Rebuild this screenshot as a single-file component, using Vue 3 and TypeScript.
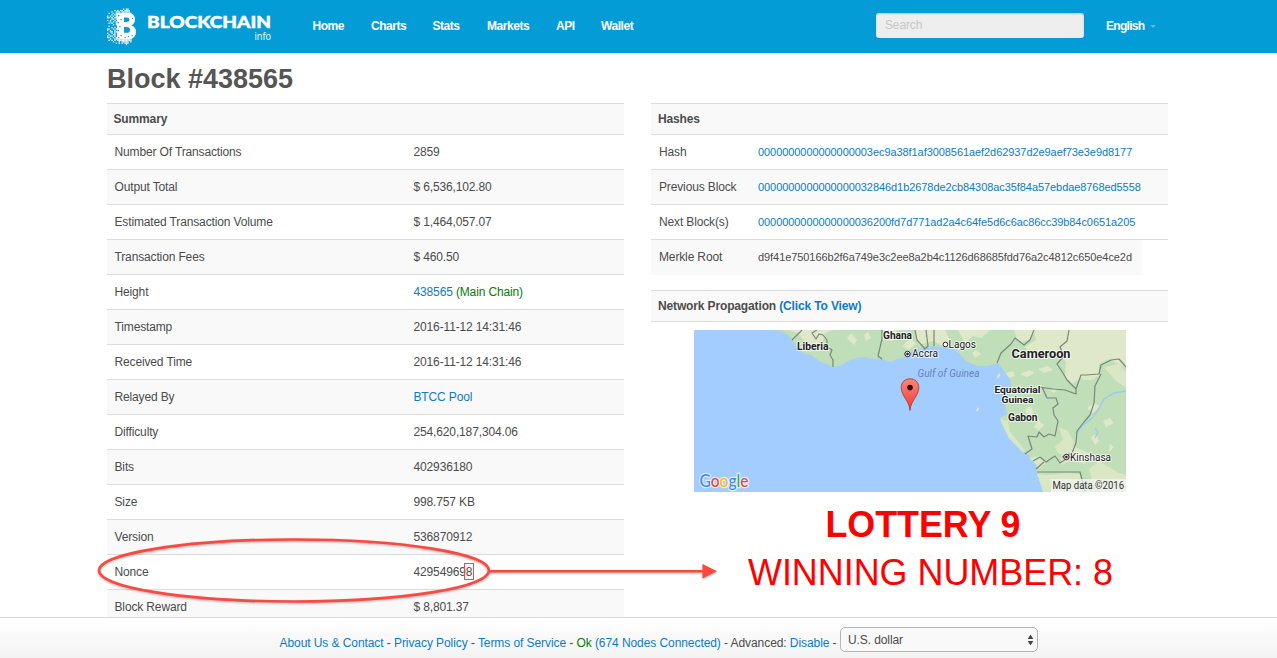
<script setup lang="ts">
interface Row {
  label: string
  value: string
  link?: boolean
  note?: string
}

const nav: string[] = ['Home', 'Charts', 'Stats', 'Markets', 'API', 'Wallet']

const summary: Row[] = [
  { label: 'Number Of Transactions', value: '2859' },
  { label: 'Output Total', value: '$ 6,536,102.80' },
  { label: 'Estimated Transaction Volume', value: '$ 1,464,057.07' },
  { label: 'Transaction Fees', value: '$ 460.50' },
  { label: 'Height', value: '438565', link: true, note: '(Main Chain)' },
  { label: 'Timestamp', value: '2016-11-12 14:31:46' },
  { label: 'Received Time', value: '2016-11-12 14:31:46' },
  { label: 'Relayed By', value: 'BTCC Pool', link: true },
  { label: 'Difficulty', value: '254,620,187,304.06' },
  { label: 'Bits', value: '402936180' },
  { label: 'Size', value: '998.757 KB' },
  { label: 'Version', value: '536870912' },
  { label: 'Nonce', value: '429549698' },
  { label: 'Block Reward', value: '$ 8,801.37' },
]

const hashes: Row[] = [
  { label: 'Hash', value: '0000000000000000003ec9a38f1af3008561aef2d62937d2e9aef73e3e9d8177', link: true },
  { label: 'Previous Block', value: '0000000000000000032846d1b2678de2cb84308ac35f84a57ebdae8768ed5558', link: true },
  { label: 'Next Block(s)', value: '0000000000000000036200fd7d771ad2a4c64fe5d6c6ac86cc39b84c0651a205', link: true },
  { label: 'Merkle Root', value: 'd9f41e750166b2f6a749e3c2ee8a2b4c1126d68685fdd76a2c4812c650e4ce2d' },
]

// Pixel dust around the logo's B, one character per cell
const dust: string[] = [
  '...........#.##...',
  '.....#.#.##.####..',
  '...#..###.######..',
  '.#..#.#.#########.',
  '...#.##.##........',
  '#.#.#.####........',
  '##.#.##.##........',
  '...##.####........',
  '#.#..#.###........',
  '..#.#.#.##........',
  '.#.#..####........',
  '....#.#.##........',
  '.#.....###........',
  '...#.#.###........',
  '##..#.#.##........',
  '#.#..#.###........',
  '..##.##.##........',
  '#..#.#.###........',
  '.#..##.###........',
  '#.##.#.#.#........',
  '##..#.####........',
  '..#..##.#.#######.',
  '.#.#.#.##########.',
  '....#...#.#####.#.',
  '......#.#.#.###...',
  '.............#....',
]
const cells = dust.flatMap((line, y) =>
  [...line].flatMap((c, x) => (c === '#' ? [{ x: x * 1.45, y: y * 1.42 }] : [])),
)
</script>

<template>
  <div class="page">
    <header class="topbar">
      <svg class="logo" width="170" height="42" viewBox="0 0 170 42">
        <g fill="#fff">
          <rect v-for="(c, i) in cells" :key="i" :x="c.x" :y="c.y + 2.5" width="1.35" height="1.3" />
          <path fill-rule="evenodd" d="M10 7H20C26 7 28 9.6 28 13.4C28 16.3 26.6 18.2 24.4 19.2C27.3 20.2 29 22.6 29 25.8C29 30.6 25.8 33.6 20 33.6H10ZM17 11.6V16H19.6C21.4 16 22.3 15.2 22.3 13.8C22.3 12.3 21.4 11.6 19.6 11.6ZM17 21V26.8H20C22 26.8 23 25.6 23 23.9C23 22 22 21 20 21Z" />
        </g>
        <g fill="#049cd7">
          <rect x="11" y="9" width="1.3" height="1.3" /><rect x="13.5" y="13" width="1.2" height="1.2" />
          <rect x="10.5" y="16" width="1.4" height="1.3" /><rect x="12.2" y="20" width="1.3" height="1.2" />
          <rect x="10.5" y="24" width="1.4" height="1.3" /><rect x="13.5" y="29" width="1.2" height="1.2" />
          <rect x="11" y="31" width="1.3" height="1.3" /><rect x="17.5" y="31" width="1.1" height="1.1" />
          <rect x="25" y="12" width="1" height="1" /><rect x="24.6" y="29" width="1.1" height="1.1" />
          <rect x="21" y="30.2" width="1" height="1" />
        </g>
        <text class="brand" x="40" y="21.7" textLength="124" lengthAdjust="spacingAndGlyphs">BLOCKCHAIN</text>
        <text class="brand-sub" x="147.5" y="34.4" textLength="16.5" lengthAdjust="spacingAndGlyphs">info</text>
      </svg>
      <nav class="nav">
        <a v-for="n in nav" :key="n">{{ n }}</a>
      </nav>
      <div class="search">Search</div>
      <div class="lang">English <i class="caret"></i></div>
    </header>

    <main class="content">
      <h1>Block #438565</h1>
      <div class="columns">
        <section class="panel">
          <h2>Summary</h2>
          <div v-for="r in summary" :key="r.label" class="row">
            <span class="label">{{ r.label }}</span>
            <span class="value"><span :class="{ link: r.link }">{{ r.value }}</span>&#32;<span v-if="r.note" class="ok">{{ r.note }}</span></span>
          </div>
        </section>
        <section class="panel side">
          <h2>Hashes</h2>
          <div v-for="r in hashes" :key="r.label" class="row hash-row">
            <span class="label">{{ r.label }}</span>
            <span class="value" :class="{ link: r.link }">{{ r.value }}</span>
          </div>
          <h2 class="propagation">Network Propagation <span class="link">(Click To View)</span></h2>
          <svg class="map" width="432" height="162" viewBox="0 0 432 162">
            <rect width="432" height="162" fill="#a3ccff" />
            <path fill="#c0dfb8" stroke="#b3d4d4" stroke-width=".7" d="M83 0L93 4L98 10L103 18L111 24L117 25L125 31L132 34L139 37L148 35L154 31L162 28L170 27L179 29L188 29L196 32L204 29L212 27L218 21L227 19L238 16L248 17L259 18L265 23L272 31L283 36L294 36L304 33L308 38L311 43L316 47L317 56L314 61L315 69L311 76L313 84L306 88L309 96L314 106L323 115L333 124L341 133L343 144L348 155L349 162H432V0Z" />
            <g fill="#dfe8c8">
              <path d="M92 0L104 3L110 11L119 15L129 11L131 3L139 0ZM153 8L157 3L163 10L160 15ZM188 0H203L199 11L189 10ZM221 0H251L256 10L249 16L239 11L225 15ZM264 0H296L287 8L279 6L271 13ZM320 0H343L336 9L328 12L323 9ZM340 0H432V38L415 29L405 34V47L392 45L378 54L371 46L372 32L366 24L352 20L338 27L331 17L342 10Z" />
              <path d="M343 144L355 145L373 143L387 144V162H349ZM361 117L369 110L365 97L374 101L380 112L374 126L364 123ZM306 89L314 91L316 102L331 120L329 123L314 107ZM395 139L405 131L423 142L432 145V162H407L400 156ZM374 114L386 119L399 125L391 134L377 130L367 135L367 126ZM384 43L394 34L405 41L400 50L389 50ZM410 37L425 34L432 42V58L420 49ZM335 128L346 126L353 132L346 138Z" opacity=".8" />
              <path d="M114 18h6l-3 4zM170 5l4-3 3 6-5 3zM208 16l9-8 5 6-8 6zM326 44l10-4 4 3-7 4zM344 39l10-3 5 4-9 3zM331 80l5-4 4 6-6 4zM340 97l4-7 6 5-5 5zM393 78l7-5 6 3-7 7zM409 91l7-3 4 5-8 4zM416 114l4 3-5 5zM356 60l9-2-5 5zM278 23l4-3 5 4-6 4zM397 107l5-3 3 7-4 4zM312 43l7-2 2 5-6 2z" />
              <path d="M303 47l2-4 1.5 2-3 4zM282 80l2-3 1 2-2 3z" />
            </g>
            <path fill="none" stroke="#9ccbed" stroke-width="1.4" d="M432 61L420 63L410 69L404 80L398 88L388 96L382 104M401 98L404 102L401 108" />
            <path fill="none" stroke="#78877b" stroke-width="1.2" stroke-linejoin="round" d="M98 10L108 0M139 37V30L136 25L138 20L133 17V10L129 5L125 4L122 9L118 3L123 0M188 29L184 26L188 9V0M221 0L223 10L231 19L234 16L232 0M240 16V0M303 33L307 23L317 14L321 8L330 15L336 10L340 0M432 37L425 29L417 30L407 35L405 44L392 45L387 45L382 59L373 50L369 43L363 34L370 26L366 17L373 11L375 0M407 44L401 56L400 73L396 85L390 92L383 101L382 113L378 123L368 127M345 57L359 59L371 60L382 64V59M348 57L353 68H362L364 74L359 78L360 85L364 91L361 106L355 104L350 107L345 102L343 107L334 106L338 119L331 124M339 131L346 127L352 132L361 126L366 133L372 129L372 126M342 139L350 132M343 142H386L389 153M386 142L391 162" />
            <g class="map-labels">
              <text x="103" y="19.8" font-size="10.5" font-weight="700" textLength="31.5" lengthAdjust="spacingAndGlyphs">Liberia</text>
              <text x="189" y="9" font-size="10.5" font-weight="700" textLength="29" lengthAdjust="spacingAndGlyphs">Ghana</text>
              <text x="218" y="27" font-size="10" textLength="26" lengthAdjust="spacingAndGlyphs">Accra</text>
              <text x="254.5" y="18" font-size="10" textLength="27.5" lengthAdjust="spacingAndGlyphs">Lagos</text>
              <text x="317.5" y="27.8" font-size="12.2" font-weight="700" textLength="59" lengthAdjust="spacingAndGlyphs">Cameroon</text>
              <text x="300.5" y="63.3" font-size="9.6" font-weight="700" textLength="46" lengthAdjust="spacingAndGlyphs">Equatorial</text>
              <text x="307.5" y="73" font-size="9.6" font-weight="700" textLength="32" lengthAdjust="spacingAndGlyphs">Guinea</text>
              <text x="314" y="90.8" font-size="10.3" font-weight="700" textLength="29.5" lengthAdjust="spacingAndGlyphs">Gabon</text>
              <text x="376" y="130.7" font-size="10" textLength="41" lengthAdjust="spacingAndGlyphs">Kinshasa</text>
            </g>
            <text x="223.5" y="46.5" class="gulf" textLength="62" lengthAdjust="spacingAndGlyphs">Gulf of Guinea</text>
            <g fill="#fff" stroke="#222" stroke-width="1">
              <circle cx="213.5" cy="24" r="2.7" /><circle cx="213.5" cy="24" r=".9" fill="#222" />
              <circle cx="251.4" cy="14.5" r="2.3" />
              <circle cx="372.4" cy="127" r="2.7" /><circle cx="372.4" cy="127" r=".9" fill="#222" />
            </g>
            <defs>
              <linearGradient id="pin" x1="0" y1="0" x2="0" y2="1">
                <stop offset="0" stop-color="#fb857d" /><stop offset="1" stop-color="#ee3b32" />
              </linearGradient>
            </defs>
            <path fill="url(#pin)" stroke="#a9352f" stroke-width=".8" d="M216 80.5C215.3 70.5 207.2 66 207.2 57.5C207.2 52.2 211 48.8 216 48.8S224.8 52.2 224.8 57.5C224.8 66 216.7 70.5 216 80.5Z" />
            <circle cx="216" cy="57.6" r="2.8" fill="#3c0b09" />
            <text class="google" x="5.5" y="156.5" textLength="49" lengthAdjust="spacingAndGlyphs"><tspan fill="#4285f4">G</tspan><tspan fill="#ea4335">o</tspan><tspan fill="#fbbc05">o</tspan><tspan fill="#4285f4">g</tspan><tspan fill="#34a853">l</tspan><tspan fill="#ea4335">e</tspan></text>
            <rect x="357" y="149" width="75" height="13" fill="#f5f5f5" opacity=".72" />
            <text class="credit" x="358.5" y="158.5" textLength="71.5" lengthAdjust="spacingAndGlyphs">Map data ©2016</text>
          </svg>
        </section>
      </div>
    </main>

    <footer class="footer">
      <span class="links"><span class="link">About Us &amp; Contact</span> - <span class="link">Privacy Policy</span> - <span class="link">Terms of Service</span> - <span class="ok">Ok</span> <span class="link">(674 Nodes Connected)</span> - Advanced: <span class="link">Disable</span> -</span>
      <div class="select">U.S. dollar
        <svg width="7" height="12" viewBox="0 0 7 12"><path fill="#444" d="M3.5 .5L6.3 5H.7ZM3.5 11.5L6.3 7H.7Z" /></svg>
      </div>
    </footer>

    <svg class="notes" width="1277" height="658" viewBox="0 0 1277 658">
      <g class="marker">
        <ellipse cx="294" cy="570.5" rx="195" ry="31" fill="none" stroke="#fb493f" stroke-width="2.7" />
        <path d="M489 571.2H704" stroke="#fb493f" stroke-width="2.4" />
        <path d="M702.5 564L717 571.2L702.5 578.4Z" fill="#fb493f" />
      </g>
      <rect x="464.5" y="563.5" width="9" height="16" fill="none" stroke="#fb493f" />
      <text class="lottery" x="825.5" y="537" textLength="195" lengthAdjust="spacingAndGlyphs">LOTTERY 9</text>
      <text class="winning" x="748" y="585.3" textLength="365" lengthAdjust="spacingAndGlyphs">WINNING NUMBER: 8</text>
    </svg>
  </div>
</template>

<style>
body {
  margin: 0;
  overflow: hidden;
}
</style>

<style scoped>
.page {
  position: relative;
  width: 1277px;
  height: 658px;
  overflow: hidden;
  background: #fff;
  color: #4c4c4c;
  font-family: "Liberation Sans", Arial, sans-serif;
  font-size: 12px;
  letter-spacing: -0.14px;
}
.topbar {
  box-sizing: border-box;
  height: 53px;
  padding-left: 107px;
  display: flex;
  background: #049cd7;
  border-bottom: 1px solid #0394cd;
  color: #fff;
}
.logo {
  flex: none;
  margin-top: 6px;
  overflow: visible;
  letter-spacing: 0;
}
.brand {
  font: 900 17.6px Lato, sans-serif;
  fill: #fff;
  stroke: #fff;
  stroke-width: 0.5px;
}
.brand-sub {
  font: 400 10.5px "Open Sans", sans-serif;
  fill: #fff;
}
.nav {
  margin-left: 35.5px;
  width: 563.5px;
  display: grid;
  grid-template-columns: 58.5px 61.5px 54.5px 69px 45px 40px;
  line-height: 52px;
  font-weight: 700;
  letter-spacing: -0.45px;
}
.search {
  box-sizing: border-box;
  margin-top: 13px;
  width: 208px;
  height: 25px;
  padding-left: 9px;
  border-radius: 3px;
  background: #eee;
  box-shadow: inset 0 1px 2px rgba(0, 0, 0, 0.18);
  color: #c6c6c6;
  line-height: 24px;
}
.lang {
  margin-left: 22px;
  line-height: 52px;
  font-weight: 700;
  letter-spacing: -0.7px;
}
.caret {
  display: inline-block;
  margin-left: 3px;
  vertical-align: 2px;
  border: 3px solid transparent;
  border-top-color: #58bde4;
  border-bottom: 0;
}
.content {
  padding: 0 109px 0 107px;
}
h1 {
  margin: 0;
  height: 50px;
  color: #555;
  font-size: 27px;
  line-height: 52px;
  letter-spacing: 0;
}
.columns {
  display: grid;
  grid-template-columns: 517px 517px;
  column-gap: 27px;
  align-items: start;
}
h2 {
  box-sizing: border-box;
  height: 32px;
  margin: 0;
  padding-left: 6.5px;
  border-top: 1px solid #ddd;
  border-bottom: 1px solid #ddd;
  background: #f9f9f9;
  font-size: 12px;
  line-height: 30px;
  letter-spacing: -0.14px;
}
.row {
  box-sizing: border-box;
  height: 35px;
  padding-left: 7.5px;
  display: grid;
  grid-template-columns: 299px 1fr;
  border-bottom: 1px solid #ddd;
  line-height: 34px;
}
.row:nth-child(odd) {
  background: #f9f9f9;
}
.side h2 {
  padding-left: 7px;
}
.side .row {
  padding-left: 8px;
}
.hash-row {
  grid-template-columns: 99px 1fr;
}
.hash-row .value {
  font-size: 11px;
  letter-spacing: -0.07px;
}
.hash-row:nth-child(5) {
  width: 491px;
  border-bottom: 0;
}
.link {
  color: #0c7cc4;
}
.ok {
  color: #0a7a0a;
}
.propagation {
  margin-top: 15px;
}
.map {
  display: block;
  margin: 8px 0 0 43px;
  letter-spacing: 0;
}
.map-labels {
  font-family: Roboto, sans-serif;
  fill: #222;
  stroke: #fff;
  stroke-width: 2px;
  stroke-opacity: 0.75;
  stroke-linejoin: round;
  paint-order: stroke;
}
.gulf {
  font: italic 10.3px Roboto, sans-serif;
  fill: #6385bd;
}
.google {
  font: 500 16.8px Lato, sans-serif;
  stroke: #fff;
  stroke-width: 2.5px;
  stroke-opacity: 0.7;
  paint-order: stroke;
}
.credit {
  font: 10px Roboto, sans-serif;
  fill: #333;
}
.footer {
  position: absolute;
  left: 0;
  right: 0;
  bottom: 0;
  box-sizing: border-box;
  height: 41px;
  padding-left: 279.5px;
  display: flex;
  border-top: 1px solid #d8d8d8;
  background: linear-gradient(#fff, #f3f3f3);
}
.links {
  width: 560.5px;
  line-height: 50px;
  white-space: nowrap;
  letter-spacing: -0.075px;
}
.select {
  box-sizing: border-box;
  margin-top: 9px;
  width: 198px;
  height: 25px;
  padding: 0 3px 0 7px;
  display: flex;
  align-items: center;
  justify-content: space-between;
  border: 1px solid #b5b5b5;
  border-radius: 5px;
  background: #f9f9f9;
  letter-spacing: -0.1px;
}
.notes {
  position: absolute;
  left: 0;
  top: 0;
  pointer-events: none;
  letter-spacing: 0;
}
.marker {
  filter: drop-shadow(0 1.5px 1px rgba(0, 0, 0, 0.3));
}
.lottery,
.winning {
  font-family: "Liberation Sans", Arial, sans-serif;
  font-size: 36px;
  fill: #f00;
}
.lottery {
  font-weight: 700;
}
</style>
